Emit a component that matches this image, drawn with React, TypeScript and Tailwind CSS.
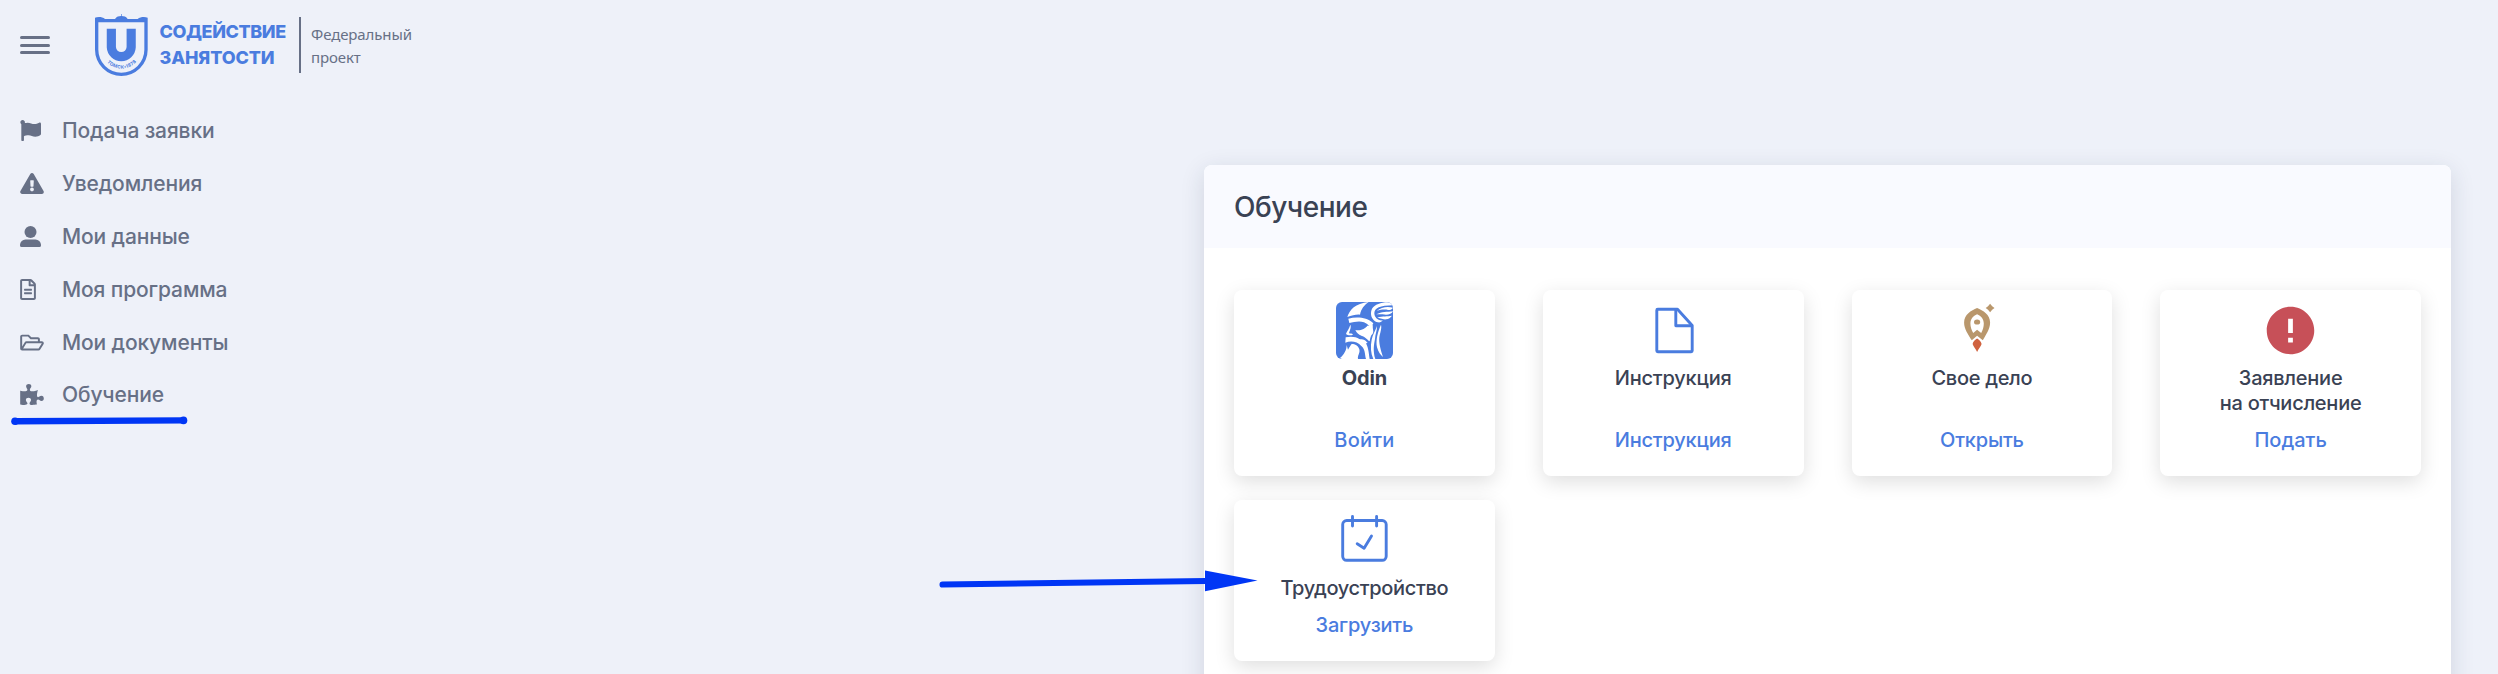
import React from "react";
import { FaFlag, FaExclamationTriangle, FaRegFileAlt, FaRegFolderOpen, FaPuzzlePiece } from "react-icons/fa";
import { MdError } from "react-icons/md";

function UserIcon({ className }: { className?: string }) {
  return (
    <svg viewBox="0 0 21 21" fill="currentColor" className={className}>
      <circle cx="10.5" cy="6" r="6" />
      <path d="M5.5 13.6h10a5.5 5.5 0 0 1 5.5 5.2v.6a1.6 1.6 0 0 1-1.6 1.6H1.6A1.6 1.6 0 0 1 0 19.4v-.6a5.5 5.5 0 0 1 5.5-5.2z" />
    </svg>
  );
}

function ShieldLogo() {
  return (
    <svg viewBox="0 0 158 186" className="h-[62px] w-[52.7px] shrink-0 text-[#4a7cdf]" fill="currentColor">
      <path fillRule="evenodd" d="M0 11C8 8 22 8 30 15H60C64 8 72 6 78 6V0H80V6C86 6 94 8 98 15H128C136 8 150 8 158 11V107A79 79 0 0 1 0 107ZM10 25V107A69 69 0 0 0 148 107V25Z" />
      <path d="M49 44V100A29.8 29.8 0 0 0 108.5 100V44" fill="none" stroke="currentColor" strokeWidth="27.5" />
      <path id="shield-arc" d="M31 138A58 58 0 0 0 129 136" fill="none" />
      <text className="font-['Inter',sans-serif] font-bold" fontSize="14" letterSpacing="0.9">
        <textPath href="#shield-arc" startOffset="50%" textAnchor="middle">ТОМСК•1878</textPath>
      </text>
    </svg>
  );
}

function OdinIcon() {
  return (
    <svg viewBox="0 0 171 171" className="size-[57px] rounded-[6px] bg-[#4a7cdf]" fill="#fff">
      <path d="M34 45C40 24 58 4 98 0C84 10 76 20 72 38C60 37 48 40 34 45Z" />
      <path d="M171 2C146 -3 118 4 108 20C100 37 108 58 126 61C132 62 138 59 140 55C126 57 115 46 115 34C115 18 132 10 171 10Z" />
      <path d="M171 17C154 13 136 15 122 27C136 22 148 22 156 24C162 25 168 22 171 17Z" />
      <path d="M171 28C154 30 136 29 121 37C134 36 142 38 150 38C160 38 168 35 171 28Z" />
      <path d="M168 41C154 45 140 40 124 47C134 48 144 53 150 52C158 51 164 47 168 41Z" />
      <path d="M37 50C62 44 92 45 112 64C108 68 110 76 106 82C104 74 96 66 84 61C70 56 54 60 40 63Z" />
      <path d="M43 68C47 76 40 88 39 94C43 96 48 93 51 98C44 101 34 100 30 96C32 88 40 80 43 68Z" />
      <path d="M58 84C72 88 88 80 94 71L110 70C110 86 116 92 106 100C103 106 102 112 101 118C92 112 88 104 76 101C68 99 62 92 58 84Z" />
      <path d="M29 106C44 103 60 104 70 111C80 112 88 113 95 123L90 124C98 140 98 152 101 171H90C86 156 88 142 76 132C64 118 44 116 28 122Z" />
      <path d="M32 129L36 143C40 136 44 130 47 126C58 126 66 130 70 142C73 154 64 160 66 171H17L12 168C24 158 32 144 32 129Z" />
      <path d="M123 72C117 88 110 98 107 113C103 134 104 152 112 171H118C110 148 114 126 117 111C118 96 123 88 123 72Z" />
      <path d="M135 68C124 92 119 116 123 136C127 150 134 160 141 165C134 144 128 122 130 106C132 92 138 80 135 68Z" />
    </svg>
  );
}

function FileIcon() {
  return (
    <svg viewBox="0 0 57 57" className="size-[57px] text-[#4a7cdf]" fill="none" stroke="currentColor" strokeWidth="2.9" strokeLinejoin="round">
      <path d="M12.8 7.2H32.5L47.2 23.5V48.8A1 1 0 0 1 46.2 49.8H12.8A1 1 0 0 1 11.8 48.8V8.2A1 1 0 0 1 12.8 7.2Z" />
      <path d="M30.8 7.5V23.7H47" />
    </svg>
  );
}

function RocketIcon() {
  return (
    <svg viewBox="0 0 57 57" className="size-[57px]">
      <path fill="#b9976c" fillRule="evenodd" d="M24.1 6C30 8.5 37.1 12.5 37.1 20.5C37.1 27 33 32.5 29.8 38.3L24.1 33.7L18.8 38.3C15.2 32.5 11.1 27 11.1 20.5C11.1 12.5 18.2 8.5 24.1 6ZM24.1 12.3C20 14 17.6 17 17.4 21.5C17.4 25 18.6 28 20.2 31L24.1 27.8L28.2 31C29.8 28 30.8 25 30.8 21.5C30.6 17 28.2 14 24.1 12.3Z" />
      <ellipse cx="24.1" cy="20" rx="3.1" ry="2.6" fill="#b9976c" />
      <path fill="#b9976c" d="M37.1 1.8L39.2 4.2L41.5 6L39.2 7.8L37.1 10.2L35 7.8L32.7 6L35 4.2Z" />
      <path fill="#d0623f" d="M24.1 36.5C26 38 28.2 39.2 28.6 42C28 44.5 25.4 46.5 24.1 50C22.8 46.5 20.2 44.5 19.6 42C20 39.2 22.2 38 24.1 36.5Z" />
    </svg>
  );
}

function CalendarIcon() {
  return (
    <svg viewBox="0 0 57 57" className="size-[57px] text-[#4a7cdf]" fill="none" stroke="currentColor" strokeWidth="2.9" strokeLinecap="round" strokeLinejoin="round">
      <rect x="6.7" y="8.5" width="43.5" height="39.8" rx="4" />
      <path d="M16.5 4.4V14M40.6 4.4V14M21.2 31.8L28.1 36.2L35.5 24" />
    </svg>
  );
}

const menu = [
  { label: "Подача заявки", icon: <FaFlag className="h-[21px] w-[21px]" /> },
  { label: "Уведомления", icon: <FaExclamationTriangle className="h-[21px] w-6" /> },
  { label: "Мои данные", icon: <UserIcon className="h-[21px] w-[21px]" /> },
  { label: "Моя программа", icon: <FaRegFileAlt className="h-[21px] w-4" /> },
  { label: "Мои документы", icon: <FaRegFolderOpen className="h-[21px] w-6" /> },
  { label: "Обучение", icon: <FaPuzzlePiece className="h-[21px] w-6" /> },
];

const cards = [
  { title: "Odin", titleClass: "font-bold tracking-[-0.1px]", action: "Войти", actionClass: "tracking-[0.2px]", icon: <OdinIcon /> },
  { title: "Инструкция", titleClass: "font-medium tracking-[-0.2px]", action: "Инструкция", actionClass: "tracking-[-0.2px]", icon: <FileIcon /> },
  { title: "Свое дело", titleClass: "font-medium tracking-[-0.3px]", action: "Открыть", actionClass: "tracking-[-0.2px]", icon: <RocketIcon /> },
  { title: "Заявление\nна отчисление", titleClass: "font-medium tracking-[-0.25px]", action: "Подать", actionClass: "", icon: <MdError className="size-[57px] text-[#c75058]" /> },
  { title: "Трудоустройство", titleClass: "font-medium tracking-[-0.35px]", action: "Загрузить", actionClass: "tracking-[-0.2px]", icon: <CalendarIcon /> },
];

export default function App() {
  return (
    <div className="relative flex h-[674px] w-full items-start justify-between overflow-hidden bg-[#eef1f9] font-['Inter',sans-serif]">
      <aside className="flex w-[440px] flex-col">
        <header className="flex h-[104px] items-start pl-5">
          <button aria-label="Меню" className="mt-9 flex flex-col gap-[4.5px]">
            <span className="h-[3px] w-[30px] rounded-full bg-[#677086]" />
            <span className="h-[3px] w-[30px] rounded-full bg-[#677086]" />
            <span className="h-[3px] w-[30px] rounded-full bg-[#677086]" />
          </button>
          <div className="mt-[14px] ml-[45px] flex">
            <ShieldLogo />
            <p className="mt-[4.5px] ml-[11.8px] w-[127.5px] whitespace-nowrap text-[18px] leading-[26px] font-extrabold text-[#4a7cdf]">
              <span className="tracking-[-0.4px]">СОДЕЙСТВИЕ</span>
              <br />
              <span className="tracking-[-0.1px]">ЗАНЯТОСТИ</span>
            </p>
            <div className="mt-[3px] ml-3 h-14 w-[2px] bg-[#677086]" />
            <p className="mt-[8.5px] ml-[10px] font-['Noto_Sans',sans-serif] text-[15px] leading-[23px] tracking-[-0.1px] text-[#677086]">
              Федеральный
              <br />
              проект
            </p>
          </div>
        </header>
        <nav className="flex flex-col pt-[0.5px]">
          {menu.map((m) => (
            <a key={m.label} className="flex h-[52.8px] items-center pl-5 text-[#677086]">
              <span className="flex w-[42px]">{m.icon}</span>
              <span className="text-[21px] leading-none font-medium tracking-[-0.12px]">{m.label}</span>
            </a>
          ))}
        </nav>
      </aside>

      <main className="mt-[165px] mr-[47px] h-[560px] w-[1247px] rounded-[8px] bg-white shadow-[0_6px_24px_rgba(30,40,70,0.14)]">
        <div className="flex h-[83px] items-center rounded-t-[8px] bg-[#f9faff] px-[30px]">
          <h1 className="text-[28px] leading-none font-medium tracking-[-0.45px] text-[#3a4254]">Обучение</h1>
        </div>
        <div className="grid grid-cols-4 gap-x-12 gap-y-6 px-[30px] pt-[42px]">
          {cards.map((c) => (
            <section
              key={c.title}
              className="flex flex-col items-center rounded-[8px] bg-white pt-3 pb-[23px] text-center text-[20px] leading-[25px] shadow-[0_6px_20px_rgba(0,0,0,0.13)]"
            >
              {c.icon}
              <h2 className={`mt-[7px] flex-1 whitespace-pre-line text-[#3a4254] ${c.titleClass}`}>{c.title}</h2>
              <a className={`mt-3 font-medium text-[#4a7cdf] ${c.actionClass}`}>{c.action}</a>
            </section>
          ))}
        </div>
      </main>

      <svg viewBox="0 0 2498 674" className="pointer-events-none absolute inset-0 h-[674px] w-[2498px]" fill="#0036f5" stroke="none">
        <path d="M15 421.3L184 420.4" stroke="#0036f5" strokeWidth="6.4" />
        <circle cx="15" cy="421.3" r="3.8" />
        <circle cx="183.5" cy="420.4" r="3.8" />
        <path d="M942.5 584.6L1206 581" stroke="#0036f5" strokeWidth="6" strokeLinecap="round" />
        <path d="M1205 570.5L1257.5 580.4L1205 591.2Z" />
      </svg>
    </div>
  );
}
